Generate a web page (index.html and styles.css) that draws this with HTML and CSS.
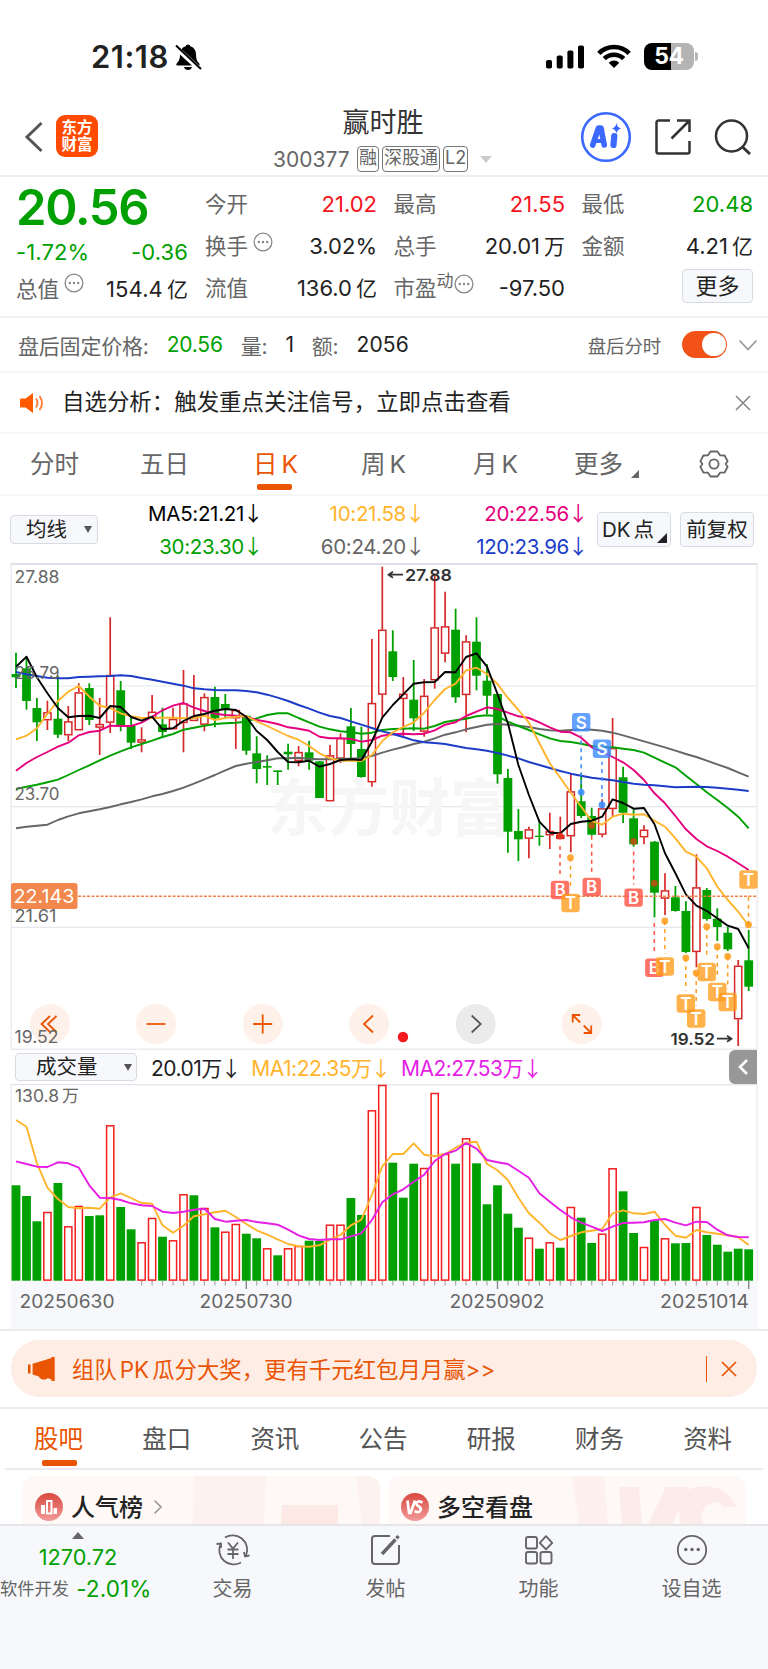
FILE: index.html
```html
<!DOCTYPE html>
<html lang="zh-CN">
<head>
<meta charset="utf-8">
<title>赢时胜 300377</title>
<link rel="stylesheet" href="styles.css">
</head>
<body>
<header class="status">
  <span class="clock">21:18</span>
  <svg class="bell" width="28" height="28" viewBox="0 0 28 28"><path d="M14 1.5c1.300 0 2 .8 2.200 1.800 3.600 1 5.800 4 5.800 8 0 5 1.200 7.200 3.300 9.200.8.900.5 2-.8 2H3.500c-1.300 0-1.600-1.100-.8-2C4.800 18.500 6 16.300 6 11.300c0-4 2.200-7 5.800-8C12 2.300 12.700 1.500 14 1.500zM10 24h8c-.5 2-2 3-4 3s-3.500-1-4-3z"/><path d="M1 3.500 26.500 27" stroke="#fff" stroke-width="5"/><path d="M2 2.500 27 26" stroke="#000" stroke-width="2"/></svg>
  <span class="spacer"></span>
  <svg class="signal" width="39" height="24" viewBox="0 0 39 24"><rect x="0" y="15" width="6" height="8.500" rx="1.800"/><rect x="10.700" y="10.500" width="6" height="13" rx="1.800"/><rect x="21.400" y="5.500" width="6" height="18" rx="1.800"/><rect x="32" y="0.500" width="6" height="23" rx="1.800"/></svg>
  <svg class="wifi" width="34" height="24" viewBox="0 0 34 24"><g fill="none" stroke="#000" stroke-width="4.600"><path d="M1.800 9.300a21.500 21.500 0 0 1 30.400 0"/><path d="M7.300 14.700a13.800 13.800 0 0 1 19.400 0"/></g><path d="M17 24l-5.300-5.300a7.500 7.500 0 0 1 10.600 0z"/></svg>
  <div class="battery"><span>54</span></div><i class="nub"></i>
</header>

<header class="titlebar">
  <svg class="back" width="20" height="32" viewBox="0 0 20 32"><path d="M17.500 2 3 16l14.500 14" fill="none" stroke="#555" stroke-width="3"/></svg>
  <div class="logo"><span>东方</span><span>财富</span></div>
  <div class="name">
    <h1>赢时胜</h1>
    <div class="code"><span class="num">300377</span><b>融</b><b>深股通</b><b>L2</b><i></i></div>
  </div>
  <svg class="ai" width="52" height="52" viewBox="0 0 52 52"><circle cx="26" cy="26" r="23.800" fill="#fff" stroke="#3b68ff" stroke-width="2.600"/><g fill="none" stroke="#3b68ff" stroke-linecap="round" stroke-linejoin="round"><path d="M12.700 34 18.500 17h2.500l3.200 17" stroke-width="5.600"/><path d="M15 30h8" stroke-width="4"/><path d="M34.300 25 33.500 34" stroke-width="6.200"/></g><path d="M36.500 12q.8 4.600 4.500 5.500-3.700 1-4.500 5-.8-4-4.500-5 3.700-.9 4.500-5.500z" fill="#3b68ff"/></svg>
  <svg class="share" width="38" height="38" viewBox="0 0 38 38"><path d="M16 2.500H4.500a2 2 0 0 0-2 2v29a2 2 0 0 0 2 2h29a2 2 0 0 0 2-2V23M23 2.500h12.500V14M35 3 17.500 20.500" fill="none" stroke="#333" stroke-width="2.500"/></svg>
  <svg class="search" width="38" height="38" viewBox="0 0 38 38"><circle cx="17.500" cy="18" r="15.500" fill="none" stroke="#333" stroke-width="2.500"/><path d="M28.500 29 36 36" stroke="#333" stroke-width="3"/></svg>
</header>

<section class="quote">
  <div class="lead">
    <strong>20.56</strong>
    <p class="down"><span>-1.72%</span><span>-0.36</span></p>
    <p><label>总值<svg class="dots" viewBox="0 0 20 20"><use href="#more"/></svg></label><span>154.4<u>亿</u></span></p>
  </div>
  <dl>
    <div><dt>今开</dt><dd class="up">21.02</dd></div>
    <div><dt>换手<svg class="dots" viewBox="0 0 20 20"><use href="#more"/></svg></dt><dd>3.02%</dd></div>
    <div><dt>流值</dt><dd>136.0<u>亿</u></dd></div>
  </dl>
  <dl>
    <div><dt>最高</dt><dd class="up">21.55</dd></div>
    <div><dt>总手</dt><dd>20.01<u>万</u></dd></div>
    <div><dt>市盈<sup>动</sup><svg class="dots near" viewBox="0 0 20 20"><use href="#more"/></svg></dt><dd>-97.50</dd></div>
  </dl>
  <dl>
    <div><dt>最低</dt><dd class="down">20.48</dd></div>
    <div><dt>金额</dt><dd>4.21<u>亿</u></dd></div>
    <div class="end"><button>更多</button></div>
  </dl>
</section>

<section class="after">
  <span class="g">盘后固定价格:</span><span class="down v1">20.56</span><span class="g v2">量:</span><span class="v3">1</span><span class="g v4">额:</span><span class="v5">2056</span>
  <span class="spacer"></span>
  <span class="g sm">盘后分时</span><span class="toggle"><i></i></span>
  <svg width="20" height="12" viewBox="0 0 20 12"><path d="M1.500 1.500 10 10.500l8.500-9" fill="none" stroke="#999" stroke-width="1.800"/></svg>
</section>

<section class="notice">
  <svg width="24" height="20" viewBox="0 0 24 20"><path d="M1 5.500h4.500L13 0v20l-7.500-5.500H1a1 1 0 0 1-1-1v-7a1 1 0 0 1 1-1z" fill="#ff5a00"/><path d="M16 5.500q3 4.500 0 9M19.500 3q5 7 0 14" fill="none" stroke="#ff7a30" stroke-width="1.800"/></svg>
  <p>自选分析：触发重点关注信号，立即点击查看</p>
  <svg width="16" height="16" viewBox="0 0 16 16"><path d="M1 1l14 14M15 1 1 15" stroke="#888" stroke-width="1.600"/></svg>
</section>

<nav class="periods">
  <a class="p1">分时</a><a class="p2">五日</a><a class="p3 on">日<em>K</em></a><a class="p4">周<em>K</em></a><a class="p5">月<em>K</em></a><a class="p6">更多<i></i></a>
  <svg width="30" height="30" viewBox="0 0 30 30"><path d="M11.500 2.500h7l2.500 3.800 4.600.2 3 5.700-2 2.800 2 2.800-3 5.700-4.600.2-2.500 3.800h-7L9 23.700l-4.600-.2-3-5.700 2-2.800-2-2.800 3-5.700L9 6.300z" fill="none" stroke="#666" stroke-width="1.800" stroke-linejoin="round"/><circle cx="15" cy="15" r="4.600" fill="none" stroke="#666" stroke-width="1.800"/></svg>
</nav>

<section class="ma">
  <button class="pick">均线<i></i></button>
  <div class="grid">
    <span style="color:#000">MA5:21.21<s>↓</s></span><span style="color:#ffb42b">10:21.58<s>↓</s></span><span style="color:#e6007e">20:22.56<s>↓</s></span>
    <span style="color:#00a000">30:23.30<s>↓</s></span><span style="color:#666">60:24.20<s>↓</s></span><span style="color:#1c3cc8">120:23.96<s>↓</s></span>
  </div>
  <button class="box">DK<span>点</span><i></i></button><button class="box">前复权</button>
</section>

<svg id="kline" class="chart" width="768" height="488" viewBox="0 562 768 488"></svg>

<section class="volbar">
  <button class="pick">成交量<i></i></button>
  <span style="color:#222">20.01万<s>↓</s></span><span style="color:#ffb42b">MA1:22.35万<s>↓</s></span><span style="color:#e61ee6">MA2:27.53万<s>↓</s></span>
  <b><svg width="12" height="18" viewBox="0 0 12 18"><path d="M10 2 3 9l7 7" fill="none" stroke="#fff" stroke-width="2.600"/></svg></b>
</section>

<svg id="volume" class="chart" width="768" height="245" viewBox="0 1084 768 245"></svg>

<section class="promo">
  <div>
    <svg width="28" height="24" viewBox="0 0 28 24"><path d="M0 7.500h2.600v9H0zM4.600 6.800 23.500 1V0h3.200v24h-3.200v-1.500L19.500 21c-.8 2.200-7.500 2.400-8.500-1.500L4.600 17.500z" fill="#ea5504"/></svg>
    <p>组队<em>PK</em>瓜分大奖，更有千元红包月月赢&gt;&gt;</p>
    <i></i>
    <svg width="16" height="16" viewBox="0 0 16 16"><path d="M1 1l14 14M15 1 1 15" stroke="#ea5504" stroke-width="1.700"/></svg>
  </div>
</section>

<nav class="topics"><a class="on">股吧</a><a>盘口</a><a>资讯</a><a>公告</a><a>研报</a><a>财务</a><a>资料</a></nav>

<section class="cards">
  <article>
    <svg class="bg" width="358" height="48" viewBox="0 0 358 48"><path d="M172 0h72l-2 48h-71z" fill="#fdf2f0"/><path d="M260 29h56v19h-57z" fill="#fce8e5"/><path d="M334 0h24v48h-18z" fill="#fdf2f0"/></svg>
    <svg class="ic" width="28" height="28" viewBox="0 0 28 28"><circle cx="14" cy="14" r="14" fill="url(#badge)"/><path d="M6 12h4v9H6zM18.500 15h3.500v6h-3.500z" fill="#fff"/><path d="M12 8h4.500v12.500H12z" fill="none" stroke="#fff" stroke-width="2"/></svg>
    <h2>人气榜</h2><svg width="10" height="16" viewBox="0 0 10 16"><path d="M1.500 1.500 8 8l-6.500 6.500" fill="none" stroke="#999" stroke-width="1.600"/></svg>
  </article>
  <article>
    <svg class="bg" width="358" height="48" viewBox="0 0 358 48"><path d="M184 0h32l4 48h-29z" fill="#fdf0ef"/><path d="M231 11h20l3 37h-20zM278 11h24l-18 37h-24zM348 31h-12q-8-10-19 0-6 9-2 17h-22q-8-32 16-37 30-4 39 20z" fill="#fcebe8"/></svg>
    <svg class="ic" width="28" height="28" viewBox="0 0 28 28"><circle cx="14" cy="14" r="14" fill="url(#badge)"/><path d="m6.500 7.500 1.600 12.500h1.500L14 7.500M21.500 9.500q-5.500-2.500-6 1 0 2 2.500 3 2.500 1.500 1.500 4-1.500 3-6 .5" fill="none" stroke="#fff" stroke-width="2.700"/></svg>
    <h2>多空看盘</h2>
  </article>
</section>

<footer class="dock">
  <div class="index"><i></i><span class="down">1270.72</span><p>软件开发<span class="down">-2.01%</span></p></div>
  <a><svg width="36" height="34" viewBox="0 0 36 34"><g fill="none" stroke="#666" stroke-width="1.800"><path d="M10 4.500A14.500 14.500 0 0 1 31 22.500M26 29.500A14.500 14.500 0 0 1 5.500 11"/><path d="m1.500 11 4.500-.5V15M34.500 22.500l-4.500 1-1-4.500"/><path d="m13 9.500 5 6 5-6M18 15.500V26M12.500 16.500h11M12.500 21h11"/></g></svg>交易</a>
  <a><svg width="32" height="34" viewBox="0 0 32 34"><g fill="none" stroke="#666"><path d="M20 3H5a3 3 0 0 0-3 3v22a3 3 0 0 0 3 3h21a3 3 0 0 0 3-3V12" stroke-width="2"/><path d="M12 21 25.500 6.500" stroke-width="3.400"/><path d="m26.500 5.300 2-2.300" stroke-width="3.400"/></g></svg>发帖</a>
  <a><svg width="32" height="34" viewBox="0 0 32 34"><g fill="none" stroke="#666" stroke-width="1.900"><rect x="3" y="4" width="11" height="11.500" rx="2"/><rect x="3" y="19" width="11" height="11.500" rx="2"/><rect x="17.500" y="19" width="11" height="11.500" rx="2"/><path d="m23 3.200 6.200 6.600-6.200 6.600-6.200-6.600z" stroke-linejoin="round"/></g></svg>功能</a>
  <a><svg width="32" height="34" viewBox="0 0 32 34"><circle cx="16" cy="17" r="14.200" fill="none" stroke="#666" stroke-width="1.800"/><g fill="#666"><circle cx="9.800" cy="16.500" r="1.700"/><circle cx="16" cy="16.500" r="1.700"/><circle cx="22.200" cy="16.500" r="1.700"/></g></svg>设自选</a>
</footer>

<svg class="defs" width="0" height="0">
  <symbol id="more" viewBox="0 0 20 20"><circle cx="10" cy="10" r="8.900" fill="none" stroke="#888" stroke-width="1.300"/><g fill="#888"><circle cx="5.800" cy="10" r="1.200"/><circle cx="10" cy="10" r="1.200"/><circle cx="14.200" cy="10" r="1.200"/></g></symbol>
  <linearGradient id="badge" x1="0" y1="0" x2="0" y2="1"><stop offset="0" stop-color="#d9483f"/><stop offset="1" stop-color="#f19a98"/></linearGradient>
</svg>
<script src="chart.js"></script>
</body>
</html>
```
FILE: styles.css
```css
* { box-sizing: border-box; }
body { margin: 0; width: 768px; height: 1669px; overflow: hidden; background: #fff; color: #222; font-family: Inter, "Noto Sans CJK SC", sans-serif; display: flex; flex-direction: column; }
svg { display: block; flex: none; }
h1, h2, p, dl, dd { margin: 0; font-weight: 400; }
em, i, u, s { font-style: normal; text-decoration: none; }
button { font: inherit; color: #222; background: #f7f8fb; border: 1px solid #d9dbe3; border-radius: 4px; padding: 0; white-space: nowrap; }
.spacer { flex: 1; }
.up { color: #f5141e; }
.down { color: #00a000; }
.defs { height: 0; }

.status { height: 80px; flex: none; display: flex; align-items: flex-start; padding: 43px 70px 0 91px; }
.clock { font-size: 31px; font-weight: 600; line-height: 28px; letter-spacing: .5px; width: 83px; white-space: nowrap; }
.signal { margin: 2px 12px 0 0; }
.wifi { margin: 1px 13px 0 0; }
.battery { width: 50px; height: 27px; border-radius: 8px; background: linear-gradient(90deg, #000 54%, #b4b4b4 54%); color: #fff; font-size: 23px; font-weight: 700; line-height: 27px; text-align: center; letter-spacing: -.5px; }
.nub { width: 3px; height: 9px; margin: 9px 0 0 1px; border-radius: 0 3px 3px 0; background: #b4b4b4; }

.titlebar { height: 97px; flex: none; display: flex; border-bottom: 2px solid #eee; padding-left: 24px; }
.back { margin: 41px 12px 0 0; }
.logo { width: 42px; height: 42px; margin-top: 35px; border-radius: 9px; background: #ff4a00; color: #fff; font-size: 15.500px; font-weight: 700; line-height: 17px; text-align: center; padding-top: 4px; display: flex; flex-direction: column; }
.name { width: 235px; margin-left: 169px; display: flex; flex-direction: column; align-items: center; padding-top: 25px; }
.name h1 { font-size: 27px; line-height: 36px; color: #333; margin-right: 3px; }
.code { display: flex; align-items: center; align-self: flex-start; padding-left: 6px; height: 26px; margin-top: 5px; font-size: 21px; color: #666; }
.code .num { width: 84px; }
.code b { font-weight: 400; font-size: 18px; line-height: 22px; border: 1.500px solid #777; border-radius: 4px; padding: 0 1px; height: 26px; margin-right: 3px; }
.code i { border: 6px solid transparent; border-top: 7px solid #ccc; border-bottom: 0; margin-left: 9px; }
.ai { margin: 31px 0 0 78px; }
.share { margin: 38px 22px 0; }
.search { margin-top: 38px; }

.quote { height: 141px; flex: none; display: flex; padding: 6px 14px 0 16px; border-bottom: 2px solid #f1f1f3; font-size: 22px; line-height: 42px; }
.lead { width: 172px; flex: none; }
.lead strong { display: block; font-size: 49px; font-weight: 600; color: #00a000; line-height: 49px; letter-spacing: -1.300px; height: 51px; }
.lead p { display: flex; justify-content: space-between; height: 36px; line-height: 37px; letter-spacing: .1px; }
.lead p + p { line-height: 38px; }
.lead p + p .dots { margin-top: 3px; }
.quote dl { width: 172px; flex: none; margin-left: 17px; letter-spacing: 0; }
.quote dl + dl { width: 171.500px; margin-left: 16.500px; }
.lead label, dt { color: #666; font-size: 21.500px; display: flex; letter-spacing: 0; }
.quote dl > div { display: flex; justify-content: space-between; height: 42px; }
.quote u { font-size: 21px; padding-left: 4px; }
.dots { width: 20px; height: 20px; margin: 7px 0 0 5px; }
.dots.near { margin-left: 0; }
sup { font-size: 17px; line-height: 28px; }
.end { justify-content: flex-end !important; }
.end button { width: 71px; height: 34px; margin-top: 2px; line-height: 31px; font-size: 22px; }

.after { height: 55px; flex: none; display: flex; align-items: center; border-bottom: 2px solid #f6f6f6; padding: 0 10px 0 18px; font-size: 21px; letter-spacing: -.2px; }
.g { color: #666; }
.v1 { margin-left: 18px; } .v2 { margin-left: 18px; } .v3 { margin-left: 18px; } .v4 { margin-left: 18px; } .v5 { margin-left: 18px; letter-spacing: .2px; }
.sm { font-size: 18.500px; }
.toggle { width: 45px; height: 27px; border-radius: 14px; background: #f25218; margin: 0 11px 0 21px; padding: 2px 1px; display: flex; justify-content: flex-end; }
.toggle i { width: 24px; height: 23px; border-radius: 12px; background: #fff; }

.notice { height: 61px; flex: none; display: flex; align-items: center; border-bottom: 2px solid #f6f6f6; padding: 0 17px 0 20px; }
.notice p { flex: 1; font-size: 22.450px; padding-left: 18px; line-height: 30px; margin-top: -1px; }

.periods { height: 62px; flex: none; display: flex; align-items: flex-start; border-bottom: 2px solid #f6f6f6; font-size: 24.500px; color: #666; padding: 12px 0 0 30px; line-height: 36px; position: relative; }
.periods a { width: 110px; flex: none; display: flex; }
.periods em { margin-left: 4px; }
.periods .p2 { width: 113px; } .periods .p3 { width: 108px; } .periods .p4 { width: 112px; } .periods .p5 { width: 101px; } .periods .p6 { width: 125px; }
.periods .on, .topics .on { color: #ea5504; }
.periods .on { position: relative; }
.periods .on::after, .topics .on::after { content: ""; position: absolute; left: 4px; top: 38px; width: 35px; height: 5.500px; border-radius: 2px; background: #ea5504; }
.p6 i { border: 4px solid transparent; border-right-color: #666; border-bottom-color: #666; height: 0; width: 0; margin: 24px 0 0 8px; }
.periods svg { margin-top: 3px; }

.ma { height: 66px; flex: none; display: flex; align-items: flex-start; padding: 15px 0 0 10px; font-size: 20.500px; }
.pick { height: 29px; display: flex; align-items: center; justify-content: space-between; font-size: 20.500px; line-height: 20px; }
.ma .pick { width: 88px; margin-top: 4px; padding: 0 5px 0 15px; }
.pick i { border: 4px solid transparent; border-top: 7px solid #555; border-bottom: 0; }
.ma .grid { width: 499px; flex: none; margin-top: -15px; display: grid; grid-template-columns: 163px 162px 163px; grid-auto-rows: 33px; line-height: 32px; text-align: right; letter-spacing: -.3px; }
s { font-family: "Noto Sans CJK SC", sans-serif; display: inline-block; width: 17px; letter-spacing: 0; text-indent: -1px; }
.ma .box { width: 74px; flex: none; height: 35px; margin-top: 1px; font-size: 20.500px; line-height: 31px; position: relative; }
.ma .box + .box { margin-left: 9px; }
.box span { margin-left: 3px; }
.box i { position: absolute; right: 3px; bottom: 3px; border: 5px solid transparent; border-right-color: #222; border-bottom-color: #222; }
.box:has(i) { text-align: left; padding-left: 4px; }

.volbar { height: 34px; flex: none; display: flex; align-items: center; padding-left: 15px; font-size: 21px; letter-spacing: -.5px; }
.volbar .pick { width: 122px; height: 28px; margin-right: 14px; padding: 0 4px 0 20px; font-size: 20.500px; letter-spacing: 0; line-height: 26px; }
.volbar > span { margin-right: 12.500px; white-space: nowrap; }
.volbar b { width: 28px; height: 34px; margin-left: auto; margin-right: 11px; background: #979797; border-radius: 6px 0 0 6px; display: flex; align-items: center; justify-content: center; }

.promo { height: 80px; flex: none; border-top: 2px solid #ebebef; border-bottom: 2px solid #ebebef; padding: 9px 11px; }
.promo > div { height: 57px; border-radius: 28px; background: #feede4; color: #ea5504; display: flex; align-items: center; padding: 0 20px 0 17px; font-size: 22.400px; }
.promo p { flex: 1; padding-left: 16px; margin-top: -2px; }
.promo em { margin: 0 3px; }
.promo i { width: 1.500px; height: 26px; background: #ea5504; margin-right: 14px; }

.topics { height: 61px; flex: none; display: flex; margin: 0 5px; padding-left: 29px; border-bottom: 2px solid #ebebef; font-size: 24.500px; line-height: 36px; padding-top: 12px; color: #555; }
.topics a { width: 108.200px; flex: none; position: relative; }
.topics .on::after { left: 8px; top: 39px; }

.cards { height: 54px; flex: none; display: flex; padding: 6px 22px 0; gap: 8px; overflow: hidden; }
.cards article { width: 358px; height: 70px; border-radius: 12px; background: #fef8f6; display: flex; padding: 17px 0 0 13px; position: relative; overflow: hidden; }
.cards .bg { position: absolute; left: 0; top: 0; }
.cards .ic, .cards h2, .cards h2 + svg { position: relative; }
.cards h2 { font-size: 24px; font-weight: 500; line-height: 30px; margin: 0 10px 0 8px; color: #222; }
.cards h2 + svg { margin-top: 6px; }

.dock { flex: 1; border-top: 2px solid #e6e6ea; background: #f7f8fb; display: flex; color: #666; font-size: 20px; }
.dock a { width: 153px; display: flex; flex-direction: column; align-items: center; padding-top: 7px; line-height: 45px; }
.index { width: 156px; display: flex; flex-direction: column; align-items: center; line-height: 31px; font-size: 21.700px; }
.index i { border: 6px solid transparent; border-bottom: 7px solid #666; border-top: 0; margin: 6px 0 3px; }
.index p { font-size: 17.300px; display: flex; white-space: nowrap; align-self: flex-start; letter-spacing: 0; }
.index p span { font-size: 22.500px; margin-left: 7px; letter-spacing: .1px; }
```
FILE: chart.js
```js
const X0 = 16, STEP = 10.467;
const GREEN = '#00a000', RED = '#d62828';
const x = i => X0 + STEP * i;
const r = n => Math.round(n * 10) / 10;

// direction, high, body top, body bottom, low
const candles = `G652.7,674,677.3,688 G656.7,668.3,701,709.7 G698,708,722.3,741 R700.7,712.3,720.3,730 G675.7,718.7,734.7,738
R706,721.3,735.3,741 R683.3,692.3,730.3,730.3 G683.3,688,720,725 R698,724,727.7,755 R617.3,675,722.7,733
G681,690.3,725.7,731.3 G717.3,725.7,742.7,749 R727.3,739.3,742.7,752.3 R695,711.7,718.3,718.3 G707.7,724.3,732,737.3
R707.7,719,729.3,729.3 R670,703.3,723,752.3 R675,716.7,721,721 R693.3,697,724.7,731.3 G686.7,697,718.3,727.3
G694,704,709.7,718 R709,710,718.3,749 G715,715.7,750.7,755 G736.3,753.3,769,783.3 G755.3,766,767.6,785
G770.7,770.4,772,785 G743.7,751.7,754.3,769.7 R746,752,761,766.3 G740.7,752.3,760.7,769.7 G761.3,761.3,798,798
R745,755.3,801.3,801.3 R733.3,738,758.7,763 G708,726.3,744,758.3 G726.7,749,777,777.7 R639,703,782.3,786.7
R566.7,629.7,694.7,717 G630.3,651.3,677,681 R677,693.7,699,737.3 G660,699.7,718.3,731 R679,695.7,731.7,736.7
R573.3,627.3,680.3,688.7 R591.7,626.3,653.7,662.3 G608.7,629.7,697.3,703 R635.3,641.3,695,732.3 G617.3,641.7,675.7,690.3
G664,680.7,695.7,714 G694,694,774.3,783.7 G769,778,831.7,852.7 G809,831,839.3,861 R826.7,829.3,838.7,858.3
G821.7,835.7,837,845.7 R812.7,831,835.3,849 R816.7,835,839,839 R773.3,791.3,836.3,852.3 G773.3,801.3,816,818
G807.7,816,834.7,835.7 R799.3,808.3,834.7,837.3 R718,748,809,816.7 G766.7,777.3,812.7,823 G809.3,818.3,844.3,846.7
R825.3,829.7,837.3,844.3 G841,841.7,892.7,917.3 R873.3,890.3,898.7,915 G886,897.3,911,911.7 G901.3,911,952,953
R854.3,887.3,952,967.3 G888,890,919,920.7 G908.3,918.7,927,941 G926.7,932.7,949.3,951 R960,965.7,1019.3,1046
G930,960.3,986.7,991`.split(/\s+/);

// moving averages, in thirds of a pixel below y = 560
const averages = [
  ['#666', [805,800,797,794,780,769,760,754,748,741,733,726,718,709,702,693,683,671,658,645,631,618,611,606,601,595,595,593,596,598,598,596,596,594,588,578,569,561,552,545,535,524,517,508,501,494,492,494,497,501,507,511,512,510,508,509,512,518,526,535,544,553,562,572,582,591,602,613,624,637,650]],
  ['#00a000', [687,680,674,667,659,645,630,616,601,587,574,562,552,542,531,522,509,503,497,492,490,488,485,475,465,460,460,474,487,500,508,514,517,521,518,510,507,506,505,506,498,486,481,476,469,466,469,485,498,510,523,535,543,546,551,558,561,562,566,570,578,593,608,622,647,672,697,720,744,770,805]],
  ['#e6007e', [632,609,591,576,560,548,526,516,512,497,498,498,488,470,451,437,429,443,453,461,465,467,470,480,485,492,502,506,512,530,535,535,537,545,540,527,523,521,523,521,511,494,487,468,455,442,447,458,469,474,487,502,515,517,533,562,576,591,607,630,660,700,730,768,808,837,859,873,890,910,930]],
  ['#1c3cc8', [336,343,348,353,355,355,351,350,349,348,346,348,354,359,365,371,377,385,388,390,391,391,393,397,404,413,423,435,446,458,468,474,484,494,504,514,522,531,541,547,549,552,558,564,568,572,579,587,595,606,615,624,633,641,647,653,657,661,666,671,674,676,679,682,681,680,681,683,686,689,693]],
  ['#ffb42b', [538,527,505,462,423,395,378,410,437,444,460,469,474,474,473,473,475,475,467,480,474,470,468,484,498,513,528,539,558,580,595,602,602,603,585,543,517,501,487,458,420,387,371,331,323,342,372,414,450,488,550,610,653,698,740,783,794,770,761,764,763,782,800,835,875,890,925,980,1020,1055,1097]],
  ['#000', [320,290,352,400,444,472,468,467,474,438,441,471,482,470,508,505,483,468,462,452,447,450,470,513,540,576,606,607,602,620,612,600,598,600,545,473,435,403,371,367,366,336,337,291,280,320,402,490,615,705,785,818,820,792,785,782,770,718,729,746,744,793,880,940,1003,1037,1053,1075,1097,1107,1165]]
];

const line = (values, color, base) =>
  `<polyline fill="none" stroke="${color}" stroke-width="1.9" stroke-linejoin="round" points="${values.map((v, i) => r(x(i)) + ',' + r(base + v / 3)).join(' ')}"/>`;
const rule = (x1, y1, x2, y2, color, w = 1.2, dash = '') =>
  `<path d="M${x1} ${y1}L${x2} ${y2}" stroke="${color}" stroke-width="${w}" stroke-dasharray="${dash}"/>`;
const text = (s, tx, ty, width, size, color, weight = 400) =>
  `<text x="${tx}" y="${ty}" textLength="${width}" lengthAdjust="spacingAndGlyphs" font-size="${size}" font-weight="${weight}" fill="${color}">${s}</text>`;

function candle(c, i) {
  const red = c[0] === 'R';
  const [h, t, b, l] = c.slice(1).split(',').map(Number);
  const cx = r(x(i)), color = red ? RED : GREEN;
  if (!red) return rule(cx, h, cx, l, color, 1.8) + `<rect x="${r(cx - 4.4)}" y="${t}" width="8.8" height="${r(b - t)}" fill="${color}"/>`;
  return rule(cx, h, cx, t, color, 1.7) + rule(cx, b, cx, l, color, 1.7) +
    `<rect x="${r(cx - 3.6)}" y="${r(t + .6)}" width="7.2" height="${r(Math.max(b - t - 1.2, 1.4))}" fill="${i === 52 ? color : '#fff'}" stroke="${color}" stroke-width="1.5"/>`;
}

// letter, centre x, centre y, dot y
const marks = [
  ['B', 560, 890, 836], ['B', 591.7, 887, 825.7], ['B', 633.6, 897.6, 841.5], ['B', 654.3, 967.7, 883.3],
  ['T', 570.5, 903, 857.7], ['T', 664.8, 966.5, 921], ['T', 685.8, 1003.5, 958], ['T', 696.2, 1018.5, 973],
  ['T', 706.7, 972, 926.7], ['T', 717.3, 992, 946.7], ['T', 727.7, 1002, 956.5], ['T', 748.5, 879.5, 924.7],
  ['S', 581.2, 722.3, 792.3], ['S', 602, 748.7, 805]
];
const tone = { B: '#ff5040', T: '#ff9d1e', S: '#3c8cff' };
const dash = ([k, cx, cy, dy]) => {
  const near = cy > dy ? cy - 13 : cy + 13;
  const from = k === 'B' ? (dy === 883.3 ? 923 : dy + 10) : dy;
  return rule(cx, from, cx, near, tone[k], 1.5, '4 4');
};
const badge = ([k, cx, cy, dy]) =>
  `<circle cx="${cx}" cy="${dy}" r="3.4" fill="${k === 'B' ? (dy === 836 ? '#e8321e' : '#c04e14') : tone[k]}" opacity=".88"/>` +
  `<rect x="${cx - 9.2}" y="${cy - 9.2}" width="18.4" height="18.4" rx="3" fill="${tone[k]}" opacity=".8"/>` +
  `<text x="${cx}" y="${cy + 6.2}" text-anchor="middle" font-size="17" font-weight="600" fill="#fff">${k}</text>`;

const knob = (cx, glyph, gray) =>
  `<circle cx="${cx}" cy="1024" r="20" fill="${gray ? '#e8e8e8' : '#fdeee5'}" opacity=".85"/><g transform="translate(${cx} 1024)" fill="none" stroke="${gray ? '#555' : '#ea5504'}" stroke-width="1.8">${glyph}</g>`;

document.getElementById('kline').innerHTML = [
  rule(11, 564, 757.6, 564, '#dfe0e8', 1.8),
  [686, 806.7, 927.3].map(g => rule(11, g, 757, g, '#e6e8ef')).join(''),
  rule(11, 1049.3, 757, 1049.3, '#ececee', 1.4),
  rule(11.2, 564, 11.2, 1050, '#e8e8ee'), rule(757.2, 564, 757.2, 1050, '#e8e8ee'),
  text('东方财富', 267, 831, 244, 62, '#f6f6f6', 700),
  candles.map(candle).join(''),
  averages.map(([color, v]) => line(v, color, 560)).join(''),
  text('27.88', 14.500, 582.7, 45, 17, '#666'), text('25.79', 14.500, 679.3, 45, 17, '#666'),
  text('23.70', 14.500, 800.3, 45, 17, '#666'), text('21.61', 14.500, 922, 42, 17, '#666'),
  knob(50, '<path d="M0-8-8.500 0 0 8M6.500-8-2 0l8.500 8"/>'),
  text('19.52', 14.500, 1043, 44, 17, '#666'),
  knob(156, '<path d="M-9.500 0h19"/>'), knob(262.7, '<path d="M-9.500 0h19M0-9.500v19"/>'),
  knob(369, '<path d="M4-8.500-5 0l9 8.500"/>'), knob(475.7, '<path d="M-4-8.500 5 0l-9 8.500"/>', true),
  knob(581.7, '<path d="M-1.500-9H-9v7.500M-8.500-8.500l7 7M2 9h7.500V1.500M9 8.500l-7-7"/>'),
  '<circle cx="403" cy="1037" r="5.200" fill="#f5191e"/>',
  rule(78, 896.2, 757, 896.2, '#f28146', 1.6, '3 1.500'),
  marks.map(dash).join(''), marks.map(badge).join(''),
  '<rect x="11" y="883" width="66.500" height="26" rx="2.500" fill="#f2884e"/>',
  text('22.143', 13.500, 902.700, 61, 19, '#fff'),
  text('27.88', 405, 580.700, 47, 16.500, '#333', 600),
  '<path d="M403 574.700h-14M393 571.700l-4.500 3 4.500 3" fill="none" stroke="#333" stroke-width="1.700"/>',
  text('19.52', 670.500, 1044.500, 44.500, 16.500, '#333', 600),
  '<path d="M717 1038.700h14M727 1035.700l4.500 3-4.500 3" fill="none" stroke="#333" stroke-width="1.700"/>'
].join('');

// volume bars and averages, in thirds of a pixel below y = 1080
const bars = 'G316 G348 G424 R396 G309 R439 R378 G408 G406 R136 G381 G448 R487 R414 G470 R481 R343 G346 R384 G442 R455 R432 G461 G475 R505 G526 R505 R498 G482 G483 R434 R434 G354 G405 R91 R15 G248 G353 G251 R264 R39 R222 G251 R175 G250 G373 G316 G401 G443 R473 G506 R487 G503 R381 G413 G489 R461 R265 G334 G459 R501 G421 R475 G490 G489 R381 G465 G494 G515 G506 G508'.split(' ');
const ma1 = [120,140,250,323,357,381,385,383,386,352,340,354,369,371,436,458,437,409,403,397,392,411,432,451,464,478,492,499,500,496,479,465,436,419,345,259,222,222,190,224,229,222,203,188,185,252,271,300,353,400,428,460,480,468,457,452,447,400,391,400,402,395,435,467,473,450,457,461,466,472,495];
const ma2 = [244,252,260,261,247,250,263,316,353,354,360,370,376,378,395,399,395,389,386,417,425,422,420,426,430,434,449,466,477,480,478,478,469,460,420,367,343,328,305,284,243,222,212,189,206,240,247,252,272,293,340,365,390,412,428,440,453,440,429,428,427,420,417,428,436,425,426,449,466,471,472];
const bar = (d, i) => {
  const top = 1080 + d.slice(1) / 3, cx = x(i);
  return d[0] === 'G'
    ? `<rect x="${r(cx - 4.4)}" y="${r(top)}" width="8.8" height="${r(1280.7 - top)}" fill="${GREEN}"/>`
    : `<rect x="${r(cx - 3.6)}" y="${r(top + .5)}" width="7.2" height="${r(1279.6 - top)}" fill="#fff" stroke="#f51e1e" stroke-width="1.5"/>`;
};
document.getElementById('volume').innerHTML = [
  '<rect x="11" y="1281" width="747" height="48" fill="#f7f8fb"/>',
  rule(11, 1084.6, 757, 1084.6, '#e3e4ea'), rule(11.2, 1084, 11.2, 1281, '#e8e8ee'), rule(757.2, 1084, 757.2, 1281, '#e8e8ee'),
  bars.map(bar).join(''),
  bars.map((_, i) => i < 12 ? '' : i % 24 === 22 ? rule(r(x(i)), 1281, r(x(i)), 1289, '#888', 1.4) : rule(r(x(i)), 1281, r(x(i)), 1285.500, '#aaa')).join(''),
  line(ma1, '#ffb42b', 1080), line(ma2, '#e61ee6', 1080),
  text('130.8', 15, 1102, 44, 17, '#666'), text('万', 62, 1102, 17, 17, '#666'),
  text('20250630', 19.500, 1308, 95, 18.500, '#666'), text('20250730', 199.500, 1308, 93, 18.500, '#666'),
  text('20250902', 449.500, 1308, 95, 18.500, '#666'), text('20251014', 660, 1308, 89, 18.500, '#666')
].join('');
```
